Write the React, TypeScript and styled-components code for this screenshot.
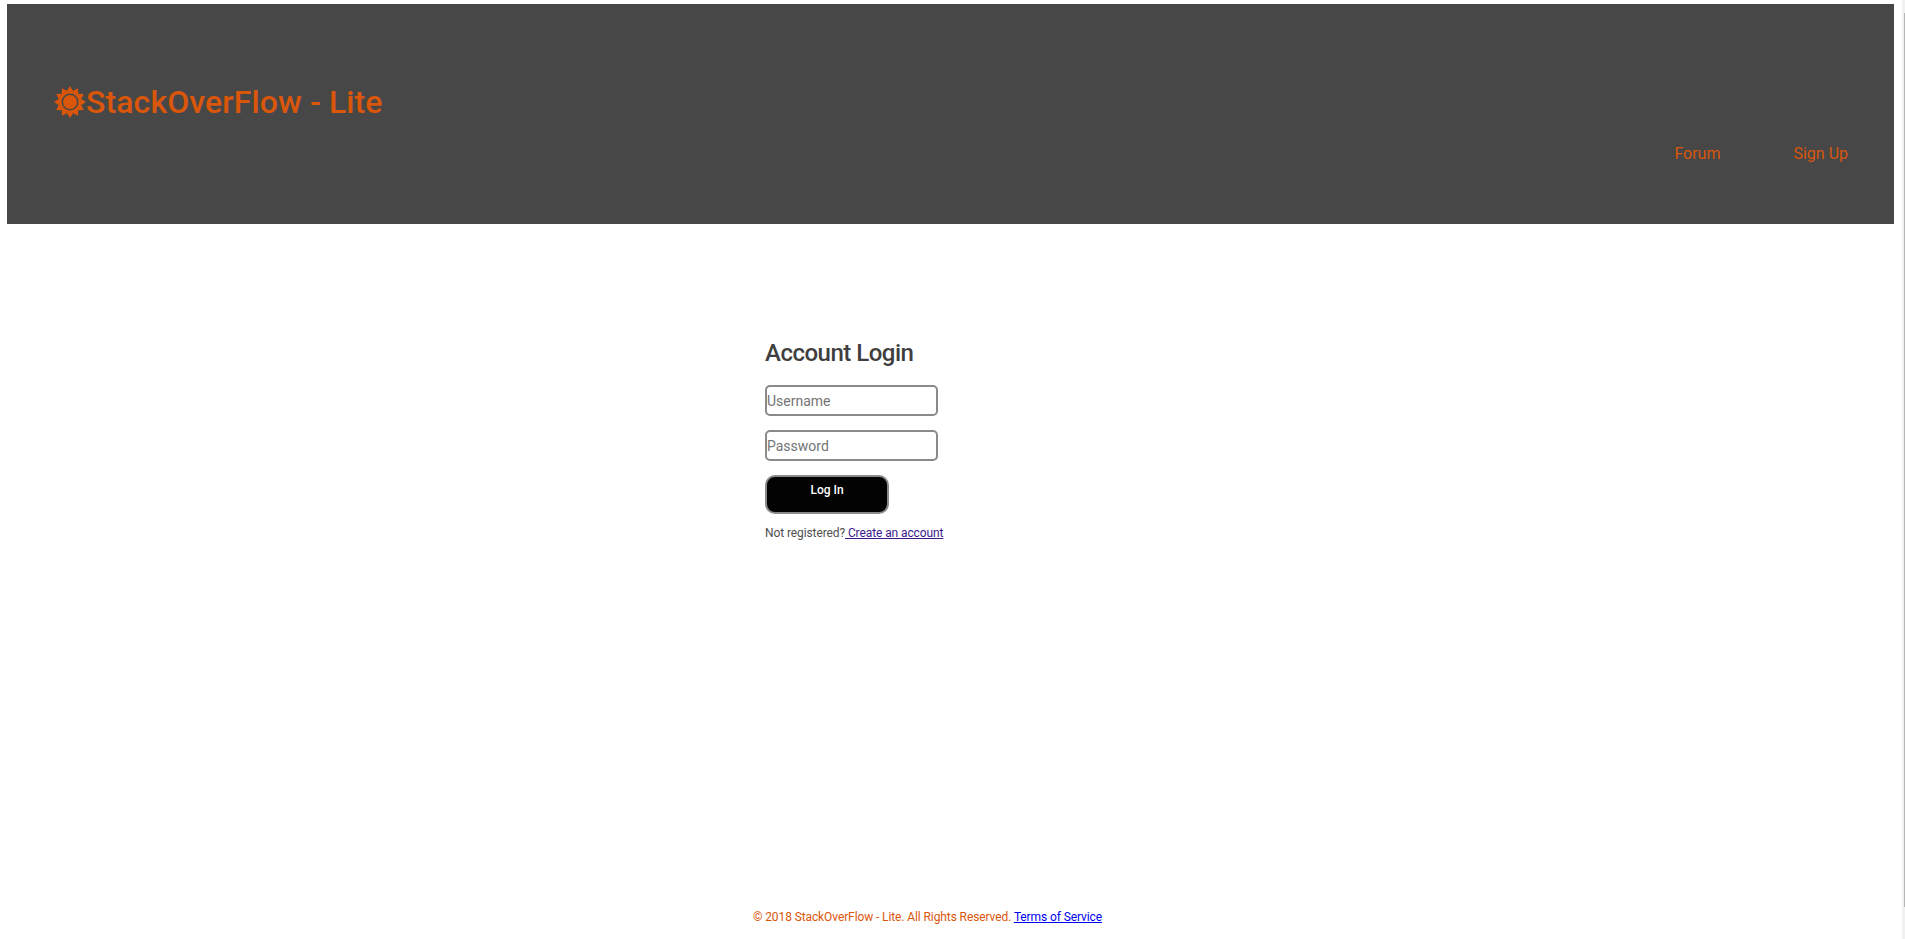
import { createGlobalStyle, styled } from 'styled-components'

const GlobalStyle = createGlobalStyle`
	html, body {
		margin: 0;
		padding: 0;
		height: 939px;
		overflow: hidden;
		background-color: #ffffff;
		font-family: 'Roboto', 'Liberation Sans', sans-serif;
	}
`

const orange = '#d9560b'

const Page = styled.div`
	height: 939px;
	width: 1902px;
	box-sizing: border-box;
	padding: 4px 8px 0 7px;
	display: flex;
	flex-direction: column;
`

const Header = styled.header`
	height: 220px;
	flex-shrink: 0;
	background-color: #474747;
	display: flex;
	justify-content: space-between;
	padding: 0 46px 0 47px;
	box-sizing: border-box;
`

const Brand = styled.a`
	display: flex;
	align-items: center;
	height: 32px;
	margin-top: 82px;
	color: ${orange};
	font-size: 32px;
	font-weight: 500;
	letter-spacing: 0.1px;
`

const Nav = styled.nav`
	display: flex;
	gap: 73px;
	margin-top: 137px;
	height: 26px;
`

const NavLink = styled.a`
	color: ${orange};
	font-size: 16px;
	line-height: 26px;
`

const Main = styled.main`
	flex: 1;
	padding: 112px 0 0 758px;
	display: flex;
	flex-direction: column;
	align-items: flex-start;
`

const Title = styled.h2`
	margin: 0 0 15px;
	font-size: 24px;
	line-height: 34px;
	font-weight: 500;
	letter-spacing: -0.5px;
	color: #3f3f3f;
`

const Field = styled.input`
	width: 173px;
	height: 31px;
	box-sizing: border-box;
	margin-bottom: 14px;
	padding: 0;
	border: 2px solid #8a8a8a;
	border-radius: 5px;
	font-family: inherit;
	font-size: 14px;
	outline: none;

	&::placeholder {
		color: #757575;
	}
`

const LoginButton = styled.button`
	width: 124px;
	height: 39px;
	box-sizing: border-box;
	padding: 0 0 10px;
	background-color: #030303;
	color: #ffffff;
	border: 2px solid #8a8a8a;
	border-radius: 10px;
	font-family: inherit;
	font-size: 12px;
	font-weight: 500;
`

const Hint = styled.p`
	margin: 11px 0 0;
	font-size: 12px;
	line-height: 16px;
	letter-spacing: -0.1px;
	color: #4f4f4f;
`

const HintLink = styled.a`
	color: #3a1a8c;
	text-decoration: underline;
`

const Footer = styled.footer`
	height: 30px;
	padding-left: 746px;
	font-size: 12px;
	line-height: 16px;
	letter-spacing: -0.1px;
	color: ${orange};
`

const FooterLink = styled.a`
	color: #0000ee;
	text-decoration: underline;
`

const ScrollTrack = styled.div`
	position: fixed;
	top: 0;
	right: 0;
	width: 3px;
	height: 939px;
	background-color: #f1f1f1;
`

const ScrollThumb = styled.div`
	position: absolute;
	top: 13px;
	right: 0;
	width: 1px;
	height: 894px;
	background-color: #b5b5b5;
`

const SunIcon = () => {
	const rays = Array.from({ length: 12 }, (_, i) => i * 30)
	return (
		<svg width="32" height="32" viewBox="0 0 32 32">
			{rays.map((deg) => (
				<polygon key={deg} points="12.5,5.5 16,0 19.5,5.5" fill={orange} transform={`rotate(${deg} 16 16)`} />
			))}
			<circle cx="16" cy="16" r="11" fill={orange} />
			<circle cx="16" cy="16" r="8.5" fill="#474747" />
			<circle cx="16" cy="16" r="7" fill={orange} />
		</svg>
	)
}

export default function App() {
	return (
		<>
			<GlobalStyle />
			<Page>
				<Header>
					<Brand>
						<SunIcon />
						StackOverFlow - Lite
					</Brand>
					<Nav>
						<NavLink>Forum</NavLink>
						<NavLink>Sign Up</NavLink>
					</Nav>
				</Header>
				<Main>
					<Title>Account Login</Title>
					<Field placeholder="Username" />
					<Field placeholder="Password" type="password" />
					<LoginButton>Log In</LoginButton>
					<Hint>
						Not registered?<HintLink> Create an account</HintLink>
					</Hint>
				</Main>
				<Footer>
					© 2018 StackOverFlow - Lite. All Rights Reserved. <FooterLink>Terms of Service</FooterLink>
				</Footer>
			</Page>
			<ScrollTrack>
				<ScrollThumb />
			</ScrollTrack>
		</>
	)
}
